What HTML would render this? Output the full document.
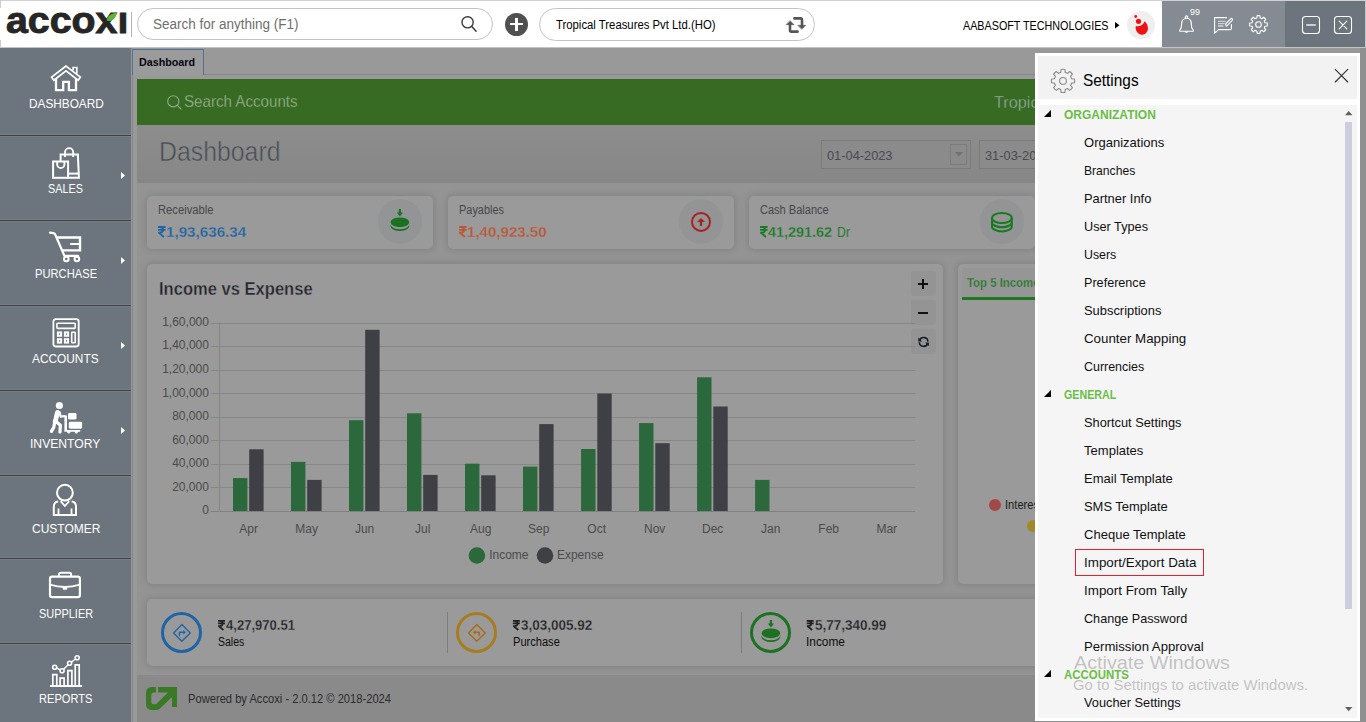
<!DOCTYPE html>
<html><head><meta charset="utf-8"><title>Accoxi</title>
<style>
*{box-sizing:border-box;margin:0;padding:0}
html,body{width:1366px;height:722px;overflow:hidden;background:#999;font-family:"Liberation Sans",sans-serif;}
body{position:relative}
.a{position:absolute}
.t{position:absolute;white-space:nowrap;line-height:1;transform-origin:0 50%;display:block}
svg{position:absolute;overflow:visible}
</style></head><body>
<div class="a" style="left:131px;top:48px;width:1235px;height:674px;background:#999;"></div>
<div class="a" style="left:132px;top:48px;width:1px;height:674px;background:#868686;"></div>
<div class="a" style="left:204px;top:74px;width:1162px;height:1px;background:#878787;"></div>
<div class="a" style="left:132px;top:49px;width:72px;height:26px;background:#9b9b9b;border:1px solid #4f7398;border-bottom:none;"></div>
<span class="t" style="left:138.5px;top:56.55px;font-size:11px;color:#05050f;font-weight:bold;transform:scaleX(0.9747);">Dashboard</span>
<div class="a" style="left:137px;top:79px;width:1229px;height:643px;background:#949494;"></div>
<div class="a" style="left:137px;top:79px;width:1229px;height:46px;background:#376a23;"></div>
<span class="t" style="left:184.2px;top:93.55px;font-size:16px;color:#9db696;transform:scaleX(0.9461);-webkit-text-stroke:0.3px #376a23;">Search Accounts</span>
<span class="t" style="left:994.0px;top:94.55px;font-size:16px;color:#93ad9c;transform:scaleX(1.0146);-webkit-text-stroke:0.3px #376a23;">Tropic</span>
<div class="a" style="left:137px;top:125px;width:1229px;height:58px;background:linear-gradient(#8d8d8d,#878787);"></div>
<span class="t" style="left:159.2px;top:137.80px;font-size:27.5px;color:#4a4f55;transform:scaleX(0.9031);-webkit-text-stroke:0.55px #8a8a8a;">Dashboard</span>
<div class="a" style="left:821px;top:140px;width:150px;height:29px;background:#8b8b8b;border:1px solid #7b7b7b;"></div>
<span class="t" style="left:826.8px;top:149.05px;font-size:13px;color:#474a52;transform:scaleX(0.9849);">01-04-2023</span>
<div class="a" style="left:950px;top:144px;width:17px;height:21px;background:#8b8b8b;border:1px solid #7b7b7b;"></div>
<svg style="left:955px;top:152px" width="8" height="5" viewBox="0 0 8 5"><path d="M0 0h8l-4 4.4z" fill="#727272"/></svg>
<div class="a" style="left:979px;top:140px;width:150px;height:29px;background:#8b8b8b;border:1px solid #7b7b7b;"></div>
<span class="t" style="left:984.8px;top:149.05px;font-size:13px;color:#474a52;transform:scaleX(0.9849);">31-03-2024</span>
<div class="a" style="left:147px;top:196px;width:286px;height:53px;background:#9a9a9a;border-radius:5px;box-shadow:0 0 7px 1px rgba(0,0,0,0.13);"></div>
<span class="t" style="left:157.6px;top:204.05px;font-size:12px;color:#46464b;transform:scaleX(0.9348);">Receivable</span>
<span class="t" style="left:166.4px;top:224.05px;font-size:15px;color:#1f64a4;font-weight:bold;transform:scaleX(1.0121);-webkit-text-stroke:0.3px #9a9a9a;">1,93,636.34</span>
<div class="a" style="left:377.5px;top:199.1px;width:44.6px;height:44.6px;border-radius:50%;background:#929496"></div>
<div class="a" style="left:448px;top:196px;width:286px;height:53px;background:#9a9a9a;border-radius:5px;box-shadow:0 0 7px 1px rgba(0,0,0,0.13);"></div>
<span class="t" style="left:458.6px;top:204.05px;font-size:12px;color:#46464b;transform:scaleX(0.9115);">Payables</span>
<span class="t" style="left:467.4px;top:224.05px;font-size:15px;color:#bd5636;font-weight:bold;transform:scaleX(1.0045);-webkit-text-stroke:0.3px #9a9a9a;">1,40,923.50</span>
<div class="a" style="left:678.5px;top:199.1px;width:44.6px;height:44.6px;border-radius:50%;background:#929496"></div>
<div class="a" style="left:749px;top:196px;width:286px;height:53px;background:#9a9a9a;border-radius:5px;box-shadow:0 0 7px 1px rgba(0,0,0,0.13);"></div>
<span class="t" style="left:759.6px;top:204.05px;font-size:12px;color:#46464b;transform:scaleX(0.9195);">Cash Balance</span>
<span class="t" style="left:768.4px;top:224.05px;font-size:15px;color:#197a28;font-weight:bold;transform:scaleX(0.9606);-webkit-text-stroke:0.3px #9a9a9a;">41,291.62</span>
<div class="a" style="left:979.5px;top:199.1px;width:44.6px;height:44.6px;border-radius:50%;background:#929496"></div>
<span class="t" style="left:836.7px;top:225.05px;font-size:14px;color:#237a30;transform:scaleX(0.8800);">Dr</span>
<div class="a" style="left:147px;top:264px;width:796px;height:320px;background:#9a9a9a;border-radius:5px;box-shadow:0 0 7px 1px rgba(0,0,0,0.13);"></div>
<span class="t" style="left:159.4px;top:280.05px;font-size:18px;color:#26262e;font-weight:bold;transform:scaleX(0.9193);-webkit-text-stroke:0.35px #9a9a9a;">Income vs Expense</span>
<div class="a" style="left:911px;top:271px;width:25px;height:25px;background:#949494;border-radius:3px;"></div>
<div class="a" style="left:911px;top:300px;width:25px;height:25px;background:#949494;border-radius:3px;"></div>
<div class="a" style="left:911px;top:329px;width:25px;height:25px;background:#949494;border-radius:3px;"></div>
<div class="a" style="left:918px;top:283px;width:10px;height:2px;background:#111;"></div>
<div class="a" style="left:922px;top:279px;width:2px;height:10px;background:#111;"></div>
<div class="a" style="left:918px;top:312px;width:10px;height:2px;background:#111;"></div>
<svg style="left:0;top:0" width="1366" height="722" viewBox="0 0 1366 722"><rect x="211" y="511" width="704.2" height="1" fill="#808080"/><rect x="211" y="487" width="704.2" height="1" fill="#878787"/><rect x="211" y="464" width="704.2" height="1" fill="#878787"/><rect x="211" y="440" width="704.2" height="1" fill="#878787"/><rect x="211" y="417" width="704.2" height="1" fill="#878787"/><rect x="211" y="393" width="704.2" height="1" fill="#878787"/><rect x="211" y="370" width="704.2" height="1" fill="#878787"/><rect x="211" y="346" width="704.2" height="1" fill="#878787"/><rect x="211" y="323" width="704.2" height="1" fill="#878787"/><rect x="219" y="322" width="1" height="190" fill="#858585"/><rect x="233.0" y="478.1" width="14.4" height="32.9" fill="#2b683b"/><rect x="249.2" y="449.3" width="14.4" height="61.7" fill="#3f4045"/><rect x="291.0" y="461.9" width="14.4" height="49.1" fill="#2b683b"/><rect x="307.2" y="479.9" width="14.4" height="31.1" fill="#3f4045"/><rect x="349.0" y="420.2" width="14.4" height="90.8" fill="#2b683b"/><rect x="365.2" y="329.8" width="14.4" height="181.2" fill="#3f4045"/><rect x="407.0" y="413.3" width="14.4" height="97.7" fill="#2b683b"/><rect x="423.2" y="474.9" width="14.4" height="36.1" fill="#3f4045"/><rect x="465.0" y="463.7" width="14.4" height="47.3" fill="#2b683b"/><rect x="481.2" y="475.3" width="14.4" height="35.7" fill="#3f4045"/><rect x="523.0" y="466.6" width="14.4" height="44.4" fill="#2b683b"/><rect x="539.2" y="424.1" width="14.4" height="86.9" fill="#3f4045"/><rect x="581.1" y="449.0" width="14.4" height="62.0" fill="#2b683b"/><rect x="597.3" y="393.5" width="14.4" height="117.5" fill="#3f4045"/><rect x="639.1" y="423.1" width="14.4" height="87.9" fill="#2b683b"/><rect x="655.3" y="443.2" width="14.4" height="67.8" fill="#3f4045"/><rect x="697.1" y="377.3" width="14.4" height="133.7" fill="#2b683b"/><rect x="713.3" y="406.5" width="14.4" height="104.5" fill="#3f4045"/><rect x="755.1" y="479.9" width="14.4" height="31.1" fill="#2b683b"/><circle cx="476.9" cy="555.5" r="8.3" fill="#2b683b"/><circle cx="545" cy="555.5" r="8.3" fill="#3f4045"/></svg>
<span class="t" style="left:202.2px;top:504.05px;font-size:12px;color:#4b4b4b;">0</span>
<span class="t" style="left:172.2px;top:481.05px;font-size:12px;color:#4b4b4b;">20,000</span>
<span class="t" style="left:172.2px;top:457.05px;font-size:12px;color:#4b4b4b;">40,000</span>
<span class="t" style="left:172.2px;top:434.05px;font-size:12px;color:#4b4b4b;">60,000</span>
<span class="t" style="left:172.2px;top:410.05px;font-size:12px;color:#4b4b4b;">80,000</span>
<span class="t" style="left:162.2px;top:387.05px;font-size:12px;color:#4b4b4b;">1,00,000</span>
<span class="t" style="left:162.2px;top:363.05px;font-size:12px;color:#4b4b4b;">1,20,000</span>
<span class="t" style="left:162.2px;top:339.05px;font-size:12px;color:#4b4b4b;">1,40,000</span>
<span class="t" style="left:162.2px;top:316.05px;font-size:12px;color:#4b4b4b;">1,60,000</span>
<span class="t" style="left:239.3px;top:523.05px;font-size:12px;color:#4b4b4b;">Apr</span>
<span class="t" style="left:295.3px;top:523.05px;font-size:12px;color:#4b4b4b;">May</span>
<span class="t" style="left:354.9px;top:523.05px;font-size:12px;color:#4b4b4b;">Jun</span>
<span class="t" style="left:415.0px;top:523.05px;font-size:12px;color:#4b4b4b;">Jul</span>
<span class="t" style="left:470.0px;top:523.05px;font-size:12px;color:#4b4b4b;">Aug</span>
<span class="t" style="left:528.0px;top:523.05px;font-size:12px;color:#4b4b4b;">Sep</span>
<span class="t" style="left:587.3px;top:523.05px;font-size:12px;color:#4b4b4b;">Oct</span>
<span class="t" style="left:644.0px;top:523.05px;font-size:12px;color:#4b4b4b;">Nov</span>
<span class="t" style="left:702.0px;top:523.05px;font-size:12px;color:#4b4b4b;">Dec</span>
<span class="t" style="left:761.0px;top:523.05px;font-size:12px;color:#4b4b4b;">Jan</span>
<span class="t" style="left:818.3px;top:523.05px;font-size:12px;color:#4b4b4b;">Feb</span>
<span class="t" style="left:876.4px;top:523.05px;font-size:12px;color:#4b4b4b;">Mar</span>
<span class="t" style="left:489.2px;top:549.05px;font-size:12px;color:#4b4b4b;">Income</span>
<span class="t" style="left:556.9px;top:549.05px;font-size:12px;color:#4b4b4b;">Expense</span>
<div class="a" style="left:958px;top:264px;width:420px;height:320px;background:#9a9a9a;border-radius:5px;box-shadow:0 0 7px 1px rgba(0,0,0,0.13);"></div>
<div class="a" style="left:962px;top:268px;width:420px;height:29px;background:#969696;border-radius:3px 3px 0 0;"></div>
<div class="a" style="left:962px;top:297px;width:420px;height:3px;background:#1f7a1f;"></div>
<span class="t" style="left:967.0px;top:277.05px;font-size:12px;color:#267a2a;font-weight:bold;transform:scaleX(0.9483);-webkit-text-stroke:0.25px #969696;">Top 5 Income</span>
<div class="a" style="left:988.9px;top:499px;width:12px;height:12px;border-radius:50%;background:#a34848"></div>
<span class="t" style="left:1005.0px;top:499.05px;font-size:12px;color:#1c1c1c;transform:scaleX(0.9295);">Interest</span>
<div class="a" style="left:1027.1px;top:519.9px;width:12px;height:12px;border-radius:50%;background:#a08a28"></div>
<div class="a" style="left:147px;top:599px;width:1240px;height:67px;background:#9a9a9a;border-radius:5px;box-shadow:0 0 7px 1px rgba(0,0,0,0.13);"></div>
<div class="a" style="left:161.1px;top:612px;width:41px;height:41px;border-radius:50%;border:3px solid #1f64a4"></div>
<span class="t" style="left:226.0px;top:618.05px;font-size:14px;color:#222226;font-weight:bold;transform:scaleX(0.9316);-webkit-text-stroke:0.3px #9a9a9a;">4,27,970.51</span>
<span class="t" style="left:217.6px;top:636.05px;font-size:12px;color:#0c0c0c;transform:scaleX(0.8761);">Sales</span>
<div class="a" style="left:456.1px;top:612px;width:41px;height:41px;border-radius:50%;border:3px solid #a67c1e"></div>
<span class="t" style="left:520.9px;top:618.05px;font-size:14px;color:#222226;font-weight:bold;transform:scaleX(0.9627);-webkit-text-stroke:0.3px #9a9a9a;">3,03,005.92</span>
<span class="t" style="left:512.5px;top:636.05px;font-size:12px;color:#0c0c0c;transform:scaleX(0.9231);">Purchase</span>
<div class="a" style="left:750.1px;top:612px;width:41px;height:41px;border-radius:50%;border:3px solid #1c7220"></div>
<span class="t" style="left:814.7px;top:618.05px;font-size:14px;color:#222226;font-weight:bold;transform:scaleX(0.9640);-webkit-text-stroke:0.3px #9a9a9a;">5,77,340.99</span>
<span class="t" style="left:806.3px;top:636.05px;font-size:12px;color:#0c0c0c;transform:scaleX(0.9885);">Income</span>
<div class="a" style="left:447px;top:612px;width:1px;height:41px;background:#7c7c7c;"></div>
<div class="a" style="left:741px;top:612px;width:1px;height:41px;background:#7c7c7c;"></div>
<div class="a" style="left:137px;top:675px;width:1229px;height:47px;background:#8a8a8a;"></div>
<span class="t" style="left:188.3px;top:693.05px;font-size:12px;color:#2b2b2b;transform:scaleX(0.9299);">Powered by Accoxi - 2.0.12 © 2018-2024</span>
<div class="a" style="left:0px;top:0px;width:1366px;height:48px;background:#fff;border-top:1px solid #d2d2d2;border-bottom:1px solid #c4c4c4;"></div>
<div class="a" style="left:0px;top:0px;width:1px;height:8px;background:#ccc;"></div>
<div class="a" style="left:0px;top:40px;width:1px;height:8px;background:#ccc;"></div>
<span class="t" style="left:5.6px;top:2.30px;font-size:37.5px;color:#262626;font-weight:bold;transform:scaleX(1.0475);-webkit-text-stroke:0.9px #262626;">accoxı</span>
<div class="a" style="left:131px;top:12px;width:1px;height:25px;background:#b4b4b4;"></div>
<div class="a" style="left:137px;top:8px;width:356px;height:32px;background:#fff;border:1px solid #c4c4c4;border-radius:16px;"></div>
<span class="t" style="left:152.5px;top:17.05px;font-size:14px;color:#6e6e6e;transform:scaleX(0.9638);">Search for anything (F1)</span>
<div class="a" style="left:538.5px;top:8px;width:276.5px;height:33px;background:#fff;border:1px solid #c4c4c4;border-radius:16.5px;"></div>
<span class="t" style="left:556.0px;top:18.80px;font-size:12.5px;color:#000;transform:scaleX(0.9063);">Tropical Treasures Pvt Ltd.(HO)</span>
<div class="a" style="left:505.2px;top:12.9px;width:22.8px;height:22.8px;border-radius:50%;background:#505050"></div>
<div class="a" style="left:510.1px;top:23.3px;width:13px;height:2.2px;background:#fff;"></div>
<div class="a" style="left:515.4px;top:18px;width:2.3px;height:13px;background:#fff;"></div>
<span class="t" style="left:962.5px;top:20.05px;font-size:12px;color:#000;transform:scaleX(0.8967);">AABASOFT TECHNOLOGIES</span>
<svg style="left:1115px;top:22px" width="5" height="7" viewBox="0 0 5 7"><path d="M0 0l4.5 3.2L0 6.4z" fill="#000"/></svg>
<div class="a" style="left:1126.7px;top:10.7px;width:28.6px;height:28.6px;border-radius:50%;background:#efefef"></div>
<div class="a" style="left:1162px;top:1px;width:123px;height:46px;background:#848b93;"></div>
<div class="a" style="left:1285px;top:1px;width:80px;height:46px;background:#6c757d;"></div>
<div class="a" style="left:1365px;top:1px;width:1px;height:46px;background:#c8c8c8;"></div>
<span class="t" style="left:1190.3px;top:6.75px;font-size:9.6px;color:#fff;transform:scaleX(0.9365);">99</span>
<div class="a" style="left:0px;top:48px;width:131px;height:674px;background:#6c757d;"></div>
<div class="a" style="left:0px;top:134px;width:131px;height:3px;background:#757e86;"></div>
<div class="a" style="left:0px;top:135px;width:131px;height:1px;background:#3f4143;"></div>
<div class="a" style="left:0px;top:219px;width:131px;height:3px;background:#757e86;"></div>
<div class="a" style="left:0px;top:220px;width:131px;height:1px;background:#3f4143;"></div>
<div class="a" style="left:0px;top:304px;width:131px;height:3px;background:#757e86;"></div>
<div class="a" style="left:0px;top:305px;width:131px;height:1px;background:#3f4143;"></div>
<div class="a" style="left:0px;top:389px;width:131px;height:3px;background:#757e86;"></div>
<div class="a" style="left:0px;top:390px;width:131px;height:1px;background:#3f4143;"></div>
<div class="a" style="left:0px;top:474px;width:131px;height:3px;background:#757e86;"></div>
<div class="a" style="left:0px;top:475px;width:131px;height:1px;background:#3f4143;"></div>
<div class="a" style="left:0px;top:557px;width:131px;height:3px;background:#757e86;"></div>
<div class="a" style="left:0px;top:558px;width:131px;height:1px;background:#3f4143;"></div>
<div class="a" style="left:0px;top:642px;width:131px;height:3px;background:#757e86;"></div>
<div class="a" style="left:0px;top:643px;width:131px;height:1px;background:#3f4143;"></div>
<span class="t" style="left:28.5px;top:97.05px;font-size:13px;color:#fff;transform:scaleX(0.9083);">DASHBOARD</span>
<span class="t" style="left:48.1px;top:182.05px;font-size:13px;color:#fff;transform:scaleX(0.8350);">SALES</span>
<span class="t" style="left:35.1px;top:267.05px;font-size:13px;color:#fff;transform:scaleX(0.8596);">PURCHASE</span>
<span class="t" style="left:32.1px;top:352.05px;font-size:13px;color:#fff;transform:scaleX(0.9130);">ACCOUNTS</span>
<span class="t" style="left:29.9px;top:437.05px;font-size:13px;color:#fff;transform:scaleX(0.9340);">INVENTORY</span>
<span class="t" style="left:32.0px;top:522.05px;font-size:13px;color:#fff;transform:scaleX(0.9224);">CUSTOMER</span>
<span class="t" style="left:39.1px;top:607.05px;font-size:13px;color:#fff;transform:scaleX(0.8413);">SUPPLIER</span>
<span class="t" style="left:39.1px;top:692.05px;font-size:13px;color:#fff;transform:scaleX(0.8529);">REPORTS</span>
<svg style="left:121px;top:172.1px" width="4" height="7" viewBox="0 0 4 7"><path d="M0 0l4 3.5L0 7z" fill="#fff"/></svg>
<svg style="left:121px;top:257.2px" width="4" height="7" viewBox="0 0 4 7"><path d="M0 0l4 3.5L0 7z" fill="#fff"/></svg>
<svg style="left:121px;top:342.2px" width="4" height="7" viewBox="0 0 4 7"><path d="M0 0l4 3.5L0 7z" fill="#fff"/></svg>
<svg style="left:121px;top:427.2px" width="4" height="7" viewBox="0 0 4 7"><path d="M0 0l4 3.5L0 7z" fill="#fff"/></svg>
<div class="a" style="left:1035px;top:53px;width:325px;height:668px;background:#fff;"></div>
<div class="a" style="left:1038px;top:56px;width:319px;height:43px;background:#f2f2f2;"></div>
<div class="a" style="left:1038px;top:105px;width:319px;height:613px;background:#f5f5f5;"></div>
<span class="t" style="left:1082.8px;top:71.80px;font-size:16.5px;color:#000;transform:scaleX(0.9326);">Settings</span>
<span class="t" style="left:1063.9px;top:108.80px;font-size:12.5px;color:#6cbd45;font-weight:bold;transform:scaleX(0.9603);">ORGANIZATION</span>
<svg style="left:1044px;top:110.2px" width="7" height="7" viewBox="0 0 7 7"><path d="M7 0v7H0z" fill="#000"/></svg>
<span class="t" style="left:1084.1px;top:136.05px;font-size:13px;color:#111;">Organizations</span>
<span class="t" style="left:1084.1px;top:164.05px;font-size:13px;color:#111;transform:scaleX(0.9322);">Branches</span>
<span class="t" style="left:1084.1px;top:192.05px;font-size:13px;color:#111;transform:scaleX(0.9908);">Partner Info</span>
<span class="t" style="left:1084.1px;top:220.05px;font-size:13px;color:#111;transform:scaleX(0.9770);">User Types</span>
<span class="t" style="left:1084.1px;top:248.05px;font-size:13px;color:#111;transform:scaleX(0.9485);">Users</span>
<span class="t" style="left:1084.1px;top:276.05px;font-size:13px;color:#111;transform:scaleX(0.9702);">Preference</span>
<span class="t" style="left:1084.1px;top:304.05px;font-size:13px;color:#111;transform:scaleX(0.9918);">Subscriptions</span>
<span class="t" style="left:1084.1px;top:332.05px;font-size:13px;color:#111;transform:scaleX(1.0248);">Counter Mapping</span>
<span class="t" style="left:1084.1px;top:360.05px;font-size:13px;color:#111;transform:scaleX(0.9561);">Currencies</span>
<span class="t" style="left:1063.9px;top:388.80px;font-size:12.5px;color:#6cbd45;font-weight:bold;transform:scaleX(0.8541);">GENERAL</span>
<svg style="left:1044px;top:390.2px" width="7" height="7" viewBox="0 0 7 7"><path d="M7 0v7H0z" fill="#000"/></svg>
<span class="t" style="left:1084.1px;top:416.05px;font-size:13px;color:#111;transform:scaleX(0.9838);">Shortcut Settings</span>
<span class="t" style="left:1084.1px;top:444.05px;font-size:13px;color:#111;">Templates</span>
<span class="t" style="left:1084.1px;top:472.05px;font-size:13px;color:#111;">Email Template</span>
<span class="t" style="left:1084.1px;top:500.05px;font-size:13px;color:#111;transform:scaleX(0.9941);">SMS Template</span>
<span class="t" style="left:1084.1px;top:528.05px;font-size:13px;color:#111;">Cheque Template</span>
<span class="t" style="left:1084.1px;top:556.05px;font-size:13px;color:#111;transform:scaleX(1.0312);">Import/Export Data</span>
<span class="t" style="left:1084.1px;top:584.05px;font-size:13px;color:#111;transform:scaleX(1.0303);">Import From Tally</span>
<span class="t" style="left:1084.1px;top:612.05px;font-size:13px;color:#111;transform:scaleX(0.9715);">Change Password</span>
<span class="t" style="left:1084.1px;top:640.05px;font-size:13px;color:#111;transform:scaleX(1.0101);">Permission Approval</span>
<span class="t" style="left:1063.9px;top:668.80px;font-size:12.5px;color:#6cbd45;font-weight:bold;transform:scaleX(0.9148);">ACCOUNTS</span>
<svg style="left:1044px;top:670.2px" width="7" height="7" viewBox="0 0 7 7"><path d="M7 0v7H0z" fill="#000"/></svg>
<span class="t" style="left:1084.1px;top:696.05px;font-size:13px;color:#111;transform:scaleX(0.9838);">Voucher Settings</span>
<div class="a" style="left:1075px;top:549px;width:129px;height:27px;background:transparent;border:1px solid #e0242f;"></div>
<div class="a" style="left:1345px;top:122px;width:7px;height:487px;background:#cdcedd;"></div>
<svg style="left:1345px;top:111px" width="7.4" height="4.2" viewBox="0 0 7.4 4.2"><path d="M0 4.2L3.7 0l3.7 4.2z" fill="#606060"/></svg>
<svg style="left:1345px;top:706.5px" width="7.4" height="4.2" viewBox="0 0 7.4 4.2"><path d="M0 0h7.4L3.7 4.2z" fill="#606060"/></svg>
<span class="t" style="left:1073.6px;top:652.95px;font-size:19.2px;color:rgba(120,120,120,0.42);transform:scaleX(1.0296);">Activate Windows</span>
<span class="t" style="left:1073.3px;top:677.80px;font-size:14.5px;color:rgba(120,120,120,0.42);transform:scaleX(1.0267);">Go to Settings to activate Windows.</span>
<div class="a" style="left:1360px;top:48px;width:6px;height:674px;background:#909090;"></div>
<div class="a" style="left:1035px;top:721px;width:331px;height:1px;background:#909090;"></div>
<svg style="left:0;top:0" width="1366" height="722" viewBox="0 0 1366 722" fill="none" stroke-linejoin="round" stroke-linecap="round">
<circle cx="467.6" cy="22.3" r="5.6" stroke="#3c3c3c" stroke-width="1.4"/><path d="M471.8 26.6L476.1 31.2" stroke="#3c3c3c" stroke-width="1.5"/>
<path d="M794.4 18.4H800.6Q802 18.4 802 19.8V25.6" stroke="#555" stroke-width="2.6"/><path d="M798.1 25.3H805.7L801.9 29.1Z" fill="#555" stroke="#555" stroke-width="0.6"/><path d="M797.6 31.6H791.4Q790 31.6 790 30.2V24.4" stroke="#555" stroke-width="2.6"/><path d="M786.4 24.7H794L790.2 20.9Z" fill="#555" stroke="#555" stroke-width="0.6"/>
<circle cx="1135.7" cy="16.5" r="1.4" fill="#ee1212"/><circle cx="1138.5" cy="21.3" r="2.6" fill="#ee1212"/><path d="M1144.4 21.2C1147.6 23.4 1148.6 27.6 1147.6 30.6C1146.6 33.6 1144 35 1141.6 34.8C1138.4 34.5 1135.6 31.4 1135.6 27.6C1135.6 26.8 1135.7 26.4 1135.9 25.9C1137.8 26.6 1140.6 26.3 1142.4 24.6C1143.6 23.5 1144.2 22.3 1144.4 21.2Z" fill="#ee1212"/>
<g stroke="#fff" stroke-width="1.1"><path d="M1185.4 18.2V17A1.1 1.1 0 0 1 1187.6 17V18.2"/><path d="M1179.6 31.2C1179.4 30.4 1179.8 29.8 1180.4 29.2C1181.4 28 1181.6 26.6 1181.6 24.4C1181.6 20.4 1183.6 18.2 1186.5 18.2C1189.4 18.2 1191.4 20.4 1191.4 24.4C1191.4 26.6 1191.6 28 1192.6 29.2C1193.2 29.8 1193.6 30.4 1193.4 31.2Z"/><path d="M1185.2 31.4A1.4 1.6 0 0 0 1187.8 31.4"/></g>
<g stroke="#fff" stroke-width="1.1"><path d="M1226.6 17.6H1214.6V33.2L1218.6 29.6H1230.2Q1231.4 29.6 1231.4 28.4V24.6"/><path d="M1218.4 21.3H1225.4M1218.4 23.7H1224.2" stroke-width="1" stroke="#dfe2e5"/><path d="M1218.4 25.9H1222.8" stroke-width="1.5" stroke="#d5d9dc"/><path d="M1226.2 26.2L1225.6 23.8L1230.6 18.8Q1231.4 18 1232.2 18.8Q1233 19.6 1232.2 20.4L1227.4 25.4Z" fill="#848b93"/></g>
<path d="M1256.82 18.01L1257.03 15.72A8.9 8.9 0 0 1 1259.97 15.72L1260.18 18.01A6.7 6.7 0 0 1 1261.90 18.73L1263.67 17.25A8.9 8.9 0 0 1 1265.75 19.33L1264.27 21.10A6.7 6.7 0 0 1 1264.99 22.82L1267.28 23.03A8.9 8.9 0 0 1 1267.28 25.97L1264.99 26.18A6.7 6.7 0 0 1 1264.27 27.90L1265.75 29.67A8.9 8.9 0 0 1 1263.67 31.75L1261.90 30.27A6.7 6.7 0 0 1 1260.18 30.99L1259.97 33.28A8.9 8.9 0 0 1 1257.03 33.28L1256.82 30.99A6.7 6.7 0 0 1 1255.10 30.27L1253.33 31.75A8.9 8.9 0 0 1 1251.25 29.67L1252.73 27.90A6.7 6.7 0 0 1 1252.01 26.18L1249.72 25.97A8.9 8.9 0 0 1 1249.72 23.03L1252.01 22.82A6.7 6.7 0 0 1 1252.73 21.10L1251.25 19.33A8.9 8.9 0 0 1 1253.33 17.25L1255.10 18.73A6.7 6.7 0 0 1 1256.82 18.01Z" stroke="#fff" stroke-width="1.1"/><circle cx="1258.5" cy="24.5" r="2.8" stroke="#fff" stroke-width="1.1"/>
<rect x="1302.5" y="16.5" width="17" height="17" rx="3" stroke="#fff" stroke-width="1.1"/><path d="M1306.2 25H1315.8" stroke="#e4e6e8" stroke-width="1.6" stroke-linecap="butt"/><rect x="1334.5" y="16.5" width="17" height="17" rx="3" stroke="#fff" stroke-width="1.1"/><path d="M1339.2 21.2L1346.8 28.8M1346.8 21.2L1339.2 28.8" stroke="#fff" stroke-width="1.1"/>
<path d="M1060.80 72.38L1061.09 69.46A11.6 11.6 0 0 1 1064.91 69.46L1065.20 72.38A8.8 8.8 0 0 1 1067.47 73.32L1069.74 71.46A11.6 11.6 0 0 1 1072.44 74.16L1070.58 76.43A8.8 8.8 0 0 1 1071.52 78.70L1074.44 78.99A11.6 11.6 0 0 1 1074.44 82.81L1071.52 83.10A8.8 8.8 0 0 1 1070.58 85.37L1072.44 87.64A11.6 11.6 0 0 1 1069.74 90.34L1067.47 88.48A8.8 8.8 0 0 1 1065.20 89.42L1064.91 92.34A11.6 11.6 0 0 1 1061.09 92.34L1060.80 89.42A8.8 8.8 0 0 1 1058.53 88.48L1056.26 90.34A11.6 11.6 0 0 1 1053.56 87.64L1055.42 85.37A8.8 8.8 0 0 1 1054.48 83.10L1051.56 82.81A11.6 11.6 0 0 1 1051.56 78.99L1054.48 78.70A8.8 8.8 0 0 1 1055.42 76.43L1053.56 74.16A11.6 11.6 0 0 1 1056.26 71.46L1058.53 73.32A8.8 8.8 0 0 1 1060.80 72.38Z" stroke="#8a8a8a" stroke-width="1.1"/><circle cx="1063" cy="80.9" r="3.4" stroke="#8a8a8a" stroke-width="1.1"/><path d="M1335.2 69.4L1347.8 82M1347.8 69.4L1335.2 82" stroke="#333" stroke-width="1.1"/>
<g stroke="#fff" stroke-linejoin="miter" stroke-linecap="butt"><path d="M66 66L51.6 77.2L53.9 80.2L66 70.8L78.1 80.2L80.4 77.2Z" stroke-width="1.7"/><path d="M73.1 70.6V67.5H76.8V73.6" stroke-width="1.7"/><path d="M56 78.6V90.1H63.2V81.9H68.9V90.1H76V78.6" stroke-width="2.3"/><path d="M60.6 161V154.6H77.9L78.9 177.8H68.6" stroke-width="2"/><path d="M68.6 173.6H78.6" stroke-width="2"/><path d="M65 157V152.2A4.1 4.1 0 0 1 73.2 152.2V157" stroke-width="1.9"/><rect x="53.1" y="161.5" width="15" height="16.3" stroke-width="2"/><path d="M57.2 162V164.4A3.6 3.6 0 0 0 64.4 164.4V162" stroke-width="1.9"/><path d="M50 232.6L53.4 233.2Q54.8 233.4 55.4 235L64.4 255.8H78" stroke-width="2.2" stroke-linecap="round" stroke-linejoin="round"/><path d="M57 237.5H80V250.4H62.4" stroke-width="2.4"/><path d="M71 244H80" stroke-width="2.2" stroke-linecap="round"/><circle cx="66.3" cy="259" r="2.3" stroke-width="2"/><circle cx="76.9" cy="259" r="2.3" stroke-width="2"/><rect x="53.4" y="319.1" width="25.3" height="27.4" rx="2.4" stroke-width="1.8"/><rect x="56.9" y="323.3" width="18.3" height="5.1" rx="0.8" stroke-width="1.6"/><rect x="57.9" y="332.4" width="3.2" height="3.4" stroke-width="2"/><rect x="64.9" y="332.4" width="3.2" height="3.4" stroke-width="2"/><rect x="57.9" y="339.2" width="3.2" height="3.4" stroke-width="2"/><rect x="64.9" y="339.2" width="3.2" height="3.4" stroke-width="2"/><rect x="71.7" y="332.2" width="3.5" height="10.6" rx="0.6" stroke-width="1.6"/><circle cx="64.9" cy="492.7" r="7.9" stroke-width="2"/><path d="M58.2 501.5Q53.8 501.8 53.8 507V515H76V507Q76 501.8 71.6 501.5" stroke-width="2"/><path d="M60.6 501.2L64.9 506L69.2 501.2" stroke-width="1.8"/><path d="M58.5 508.4V515M71.5 508.4V515" stroke-width="1.8"/><rect x="50" y="576.6" width="29.9" height="20.5" rx="2.2" stroke-width="2.2"/><path d="M59 576V574.4Q59 572.7 60.8 572.7H69.3Q71.1 572.7 71.1 574.4V576" stroke-width="2"/><path d="M50 584.6Q65 589.4 79.9 584.6" stroke-width="2"/><rect x="62.9" y="586.6" width="4" height="3" rx="1" fill="#fff" stroke-width="0.6"/><path d="M50 686H82.1" stroke-width="2.1"/><path d="M52.8 685V674.6H56.8V685" stroke-width="1.7"/><path d="M60.1 685V678.2H64.1V685" stroke-width="1.7"/><path d="M67.9 685V670.7H71.9V685" stroke-width="1.7"/><path d="M75.2 685V664.9H79.2V685" stroke-width="1.7"/><path d="M56.4 668L60.3 669.9M63.6 669.3L68.1 664.8M71.3 662.1L75.5 659" stroke-width="1.4"/><circle cx="54.7" cy="667.2" r="2" stroke-width="1.6"/><circle cx="62.1" cy="670.8" r="2" stroke-width="1.6"/><circle cx="69.6" cy="663.3" r="2" stroke-width="1.6"/><circle cx="77.2" cy="657.8" r="2" stroke-width="1.6"/></g>
<g fill="#fff" stroke="none"><circle cx="59.4" cy="405.5" r="3.6"/><rect x="68" y="413" width="8.5" height="6.6" rx="1.4"/><rect x="68.8" y="421.8" width="13.3" height="6.9" rx="1.4"/><path d="M64.4 415.4H67V430.1H80.2V431.7H78Q77.6 433.6 76.3 433.6Q75 433.6 74.6 431.7H70.5Q70.1 433.6 68.8 433.6Q67.5 433.6 67.1 431.7H64.4Z"/></g><g stroke="#fff" fill="none" stroke-linecap="round" stroke-linejoin="round"><path d="M57.5 412.4L55.2 421.4" stroke-width="4.8"/><path d="M59.6 412L60.6 416.6L64.4 416.2" stroke-width="2.2"/><path d="M54.6 422.4L53.8 427.2L51.4 431.4" stroke-width="3.2"/><path d="M56.6 422L60.4 425.2L60 432" stroke-width="3.2"/><path d="M53.4 413.4L53 418.6" stroke="#6c757d" stroke-width="0.7"/></g>
<circle cx="173.3" cy="101.3" r="5.6" stroke="#8fa887" stroke-width="1.1"/><path d="M177.4 105.4L181 109" stroke="#8fa887" stroke-width="1.1"/>
<ellipse cx="399.9" cy="222.3" rx="9.3" ry="4.9" fill="#1b7122"/><path d="M390.59999999999997 224.5a9.3 4.9 0 0 0 18.6 0v1.6a9.3 4.9 0 0 1 -18.6 0z" fill="none" stroke="none"/><path d="M390.59999999999997 223.9A9.3 5.4 0 0 0 409.2 223.9V225.9A9.3 5.2 0 0 1 390.59999999999997 225.9Z" fill="#1b7122"/><path d="M390.0 222.70000000000002A9.9 5.5 0 0 0 409.79999999999995 222.70000000000002" fill="none" stroke="#95979a" stroke-width="0.9"/><path d="M398.79999999999995 209.0h2.2v3.6h2l-3.1 3.8l-3.1 -3.8h2z" fill="#1b7122"/><circle cx="701" cy="221.9" r="9" stroke="#a8231f" stroke-width="2"/><path d="M699.9 225.9v-4h-2.9l4 -4l4 4h-2.9v4z" fill="#a8231f"/><g stroke="#187a1c" stroke-width="2" stroke-linecap="butt"><ellipse cx="1001.9" cy="218" rx="9.9" ry="5"/><path d="M992 218V226.4A9.9 5 0 0 0 1011.8 226.4V218"/><path d="M992 222.2A9.9 5 0 0 0 1011.8 222.2"/></g>
<g stroke="#141c26" stroke-width="1.6" stroke-linecap="butt"><path d="M919.6 340.2A4.3 4.3 0 0 1 927.9 341.6"/><path d="M927.6 343.6A4.3 4.3 0 0 1 919.3 342.2"/></g><path d="M918.3 337.6V341.4H922.1Z" fill="#141c26"/><path d="M928.9 346.2V342.4H925.1Z" fill="#141c26"/>
<path d="M181.9 624.6L190.20000000000002 632.9L181.9 641.1999999999999L173.6 632.9Z" fill="none" stroke="#1f66a6" stroke-width="1.4"/><path d="M179.5 635.3v-3h4.2" fill="none" stroke="#1f66a6" stroke-width="1.5"/><path d="M183.3 629.9l2.6 2.4l-2.6 2.4z" fill="#1f66a6"/><path d="M476.8 624.6L485.1 632.9L476.8 641.1999999999999L468.5 632.9Z" fill="none" stroke="#a86b15" stroke-width="1.4"/><path d="M479.2 635.3v-3h-4.2" fill="none" stroke="#a86b15" stroke-width="1.5"/><path d="M475.40000000000003 629.9l-2.6 2.4l2.6 2.4z" fill="#a86b15"/><ellipse cx="770.9" cy="633.3" rx="9.3" ry="4.9" fill="#1c7220"/><path d="M761.6 635.5a9.3 4.9 0 0 0 18.6 0v1.6a9.3 4.9 0 0 1 -18.6 0z" fill="none" stroke="none"/><path d="M761.6 634.9A9.3 5.4 0 0 0 780.1999999999999 634.9V636.9A9.3 5.2 0 0 1 761.6 636.9Z" fill="#1c7220"/><path d="M761.0 633.6999999999999A9.9 5.5 0 0 0 780.8 633.6999999999999" fill="none" stroke="#95979a" stroke-width="0.9"/><path d="M769.8 620.0h2.2v3.6h2l-3.1 3.8l-3.1 -3.8h2z" fill="#1c7220"/><path d="M158 687H177V707H172V697L160 708.5Q158.4 710 156 710H152Q146 710 146 704V693Q146 687 152 687H156V692.5H153.5Q151.3 692.5 151.3 695V702Q151.3 704.2 153.5 704.2H156L168 692.5H158Z" fill="#3a7a26"/>
<path d="M158.00 226.95H165.60M158.00 229.84H165.60M159.90 226.95C164.08 226.95 164.08 232.62 159.90 232.62H158.15M158.76 232.62L163.93 236.90" fill="none" stroke="#1f64a4" stroke-width="1.9" stroke-linecap="butt" stroke-linejoin="miter"/><path d="M459.00 226.95H466.60M459.00 229.84H466.60M460.90 226.95C465.08 226.95 465.08 232.62 460.90 232.62H459.15M459.76 232.62L464.93 236.90" fill="none" stroke="#bd5636" stroke-width="1.9" stroke-linecap="butt" stroke-linejoin="miter"/><path d="M760.00 226.95H767.60M760.00 229.84H767.60M761.90 226.95C766.08 226.95 766.08 232.62 761.90 232.62H760.15M760.76 232.62L765.93 236.90" fill="none" stroke="#197a28" stroke-width="1.9" stroke-linecap="butt" stroke-linejoin="miter"/><path d="M218.00 620.79H225.00M218.00 623.47H225.00M219.75 620.79C223.60 620.79 223.60 626.04 219.75 626.04H218.14M218.70 626.04L223.46 630.00" fill="none" stroke="#222226" stroke-width="1.7" stroke-linecap="butt" stroke-linejoin="miter"/><path d="M512.90 620.79H519.90M512.90 623.47H519.90M514.65 620.79C518.50 620.79 518.50 626.04 514.65 626.04H513.04M513.60 626.04L518.36 630.00" fill="none" stroke="#222226" stroke-width="1.7" stroke-linecap="butt" stroke-linejoin="miter"/><path d="M806.70 620.79H813.70M806.70 623.47H813.70M808.45 620.79C812.30 620.79 812.30 626.04 808.45 626.04H806.84M807.40 626.04L812.16 630.00" fill="none" stroke="#222226" stroke-width="1.7" stroke-linecap="butt" stroke-linejoin="miter"/>
<path d="M106.6 20.6C107.6 15.6 112 13 116.8 13.1C116.2 17 113.4 21.2 108.8 21C107.9 21 107.2 20.9 106.6 20.6Z" fill="#5cb534"/>
</svg>
</body></html>
